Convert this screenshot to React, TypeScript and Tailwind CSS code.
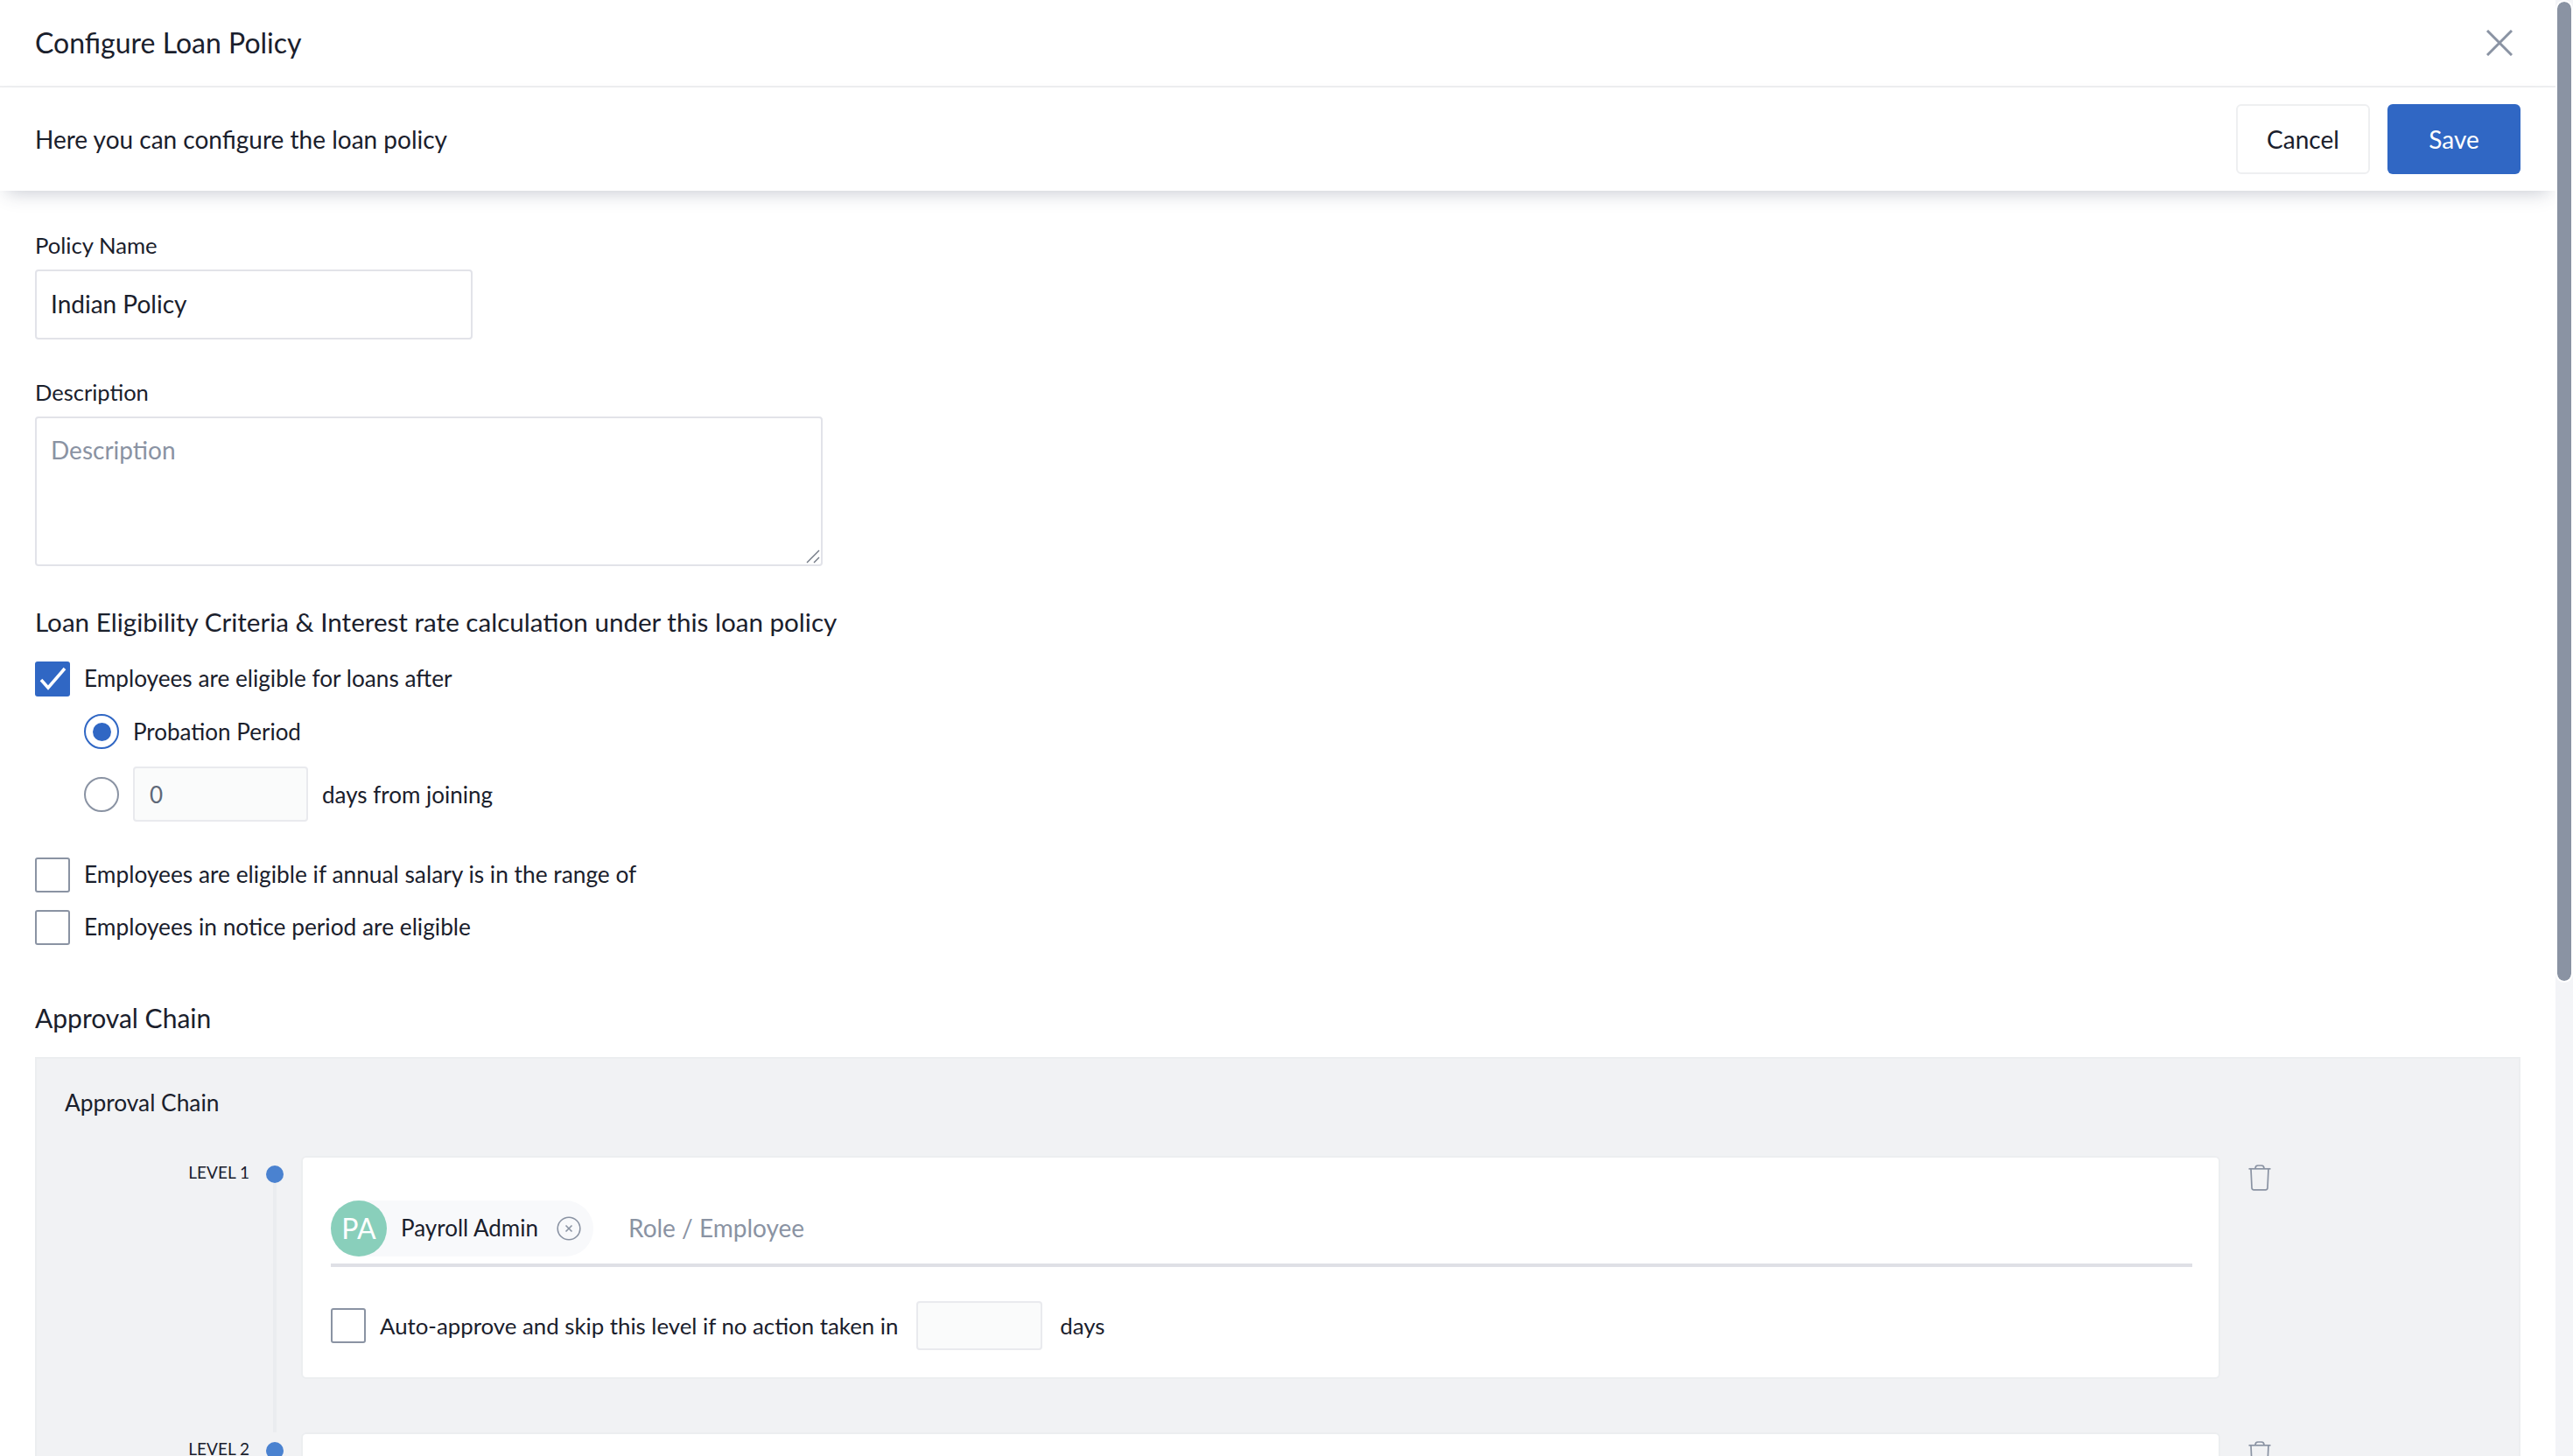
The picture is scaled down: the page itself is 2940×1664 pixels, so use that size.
import React from 'react';

const Check = () => (
  <svg viewBox="0 0 40 40" className="w-10 h-10">
    <path d="M7 21 L15 30 L34 8" fill="none" stroke="#fff" strokeWidth="3.5" />
  </svg>
);

const Checkbox: React.FC<{ checked?: boolean }> = ({ checked }) =>
  checked ? (
    <span className="w-10 h-10 shrink-0 rounded-[3px] bg-[#3067c4] flex items-center justify-center">
      <Check />
    </span>
  ) : (
    <span className="w-10 h-10 shrink-0 rounded-[3px] bg-white border-2 border-[#8a93a3]" />
  );

const Radio: React.FC<{ checked?: boolean }> = ({ checked }) =>
  checked ? (
    <span className="w-10 h-10 shrink-0 rounded-full border-2 border-[#3067c4] bg-white flex items-center justify-center">
      <span className="w-[21px] h-[21px] rounded-full bg-[#3067c4]" />
    </span>
  ) : (
    <span className="w-10 h-10 shrink-0 rounded-full border-2 border-[#8a93a3] bg-white" />
  );

const TrashIcon = () => (
  <svg viewBox="0 0 26 30" className="w-[26px] h-[30px]" fill="none" stroke="#8a93a3" strokeWidth="1.7">
    <path d="M0.5 4.8 H25.5" />
    <path d="M8 4.5 C8 2 9 1 11 1 H15 C17 1 18 2 18 4.5" />
    <path d="M3 5 L4 26.5 A2.2 2.2 0 0 0 6.2 28.8 H19.8 A2.2 2.2 0 0 0 22 26.5 L23 5" />
  </svg>
);

const levels = [
  { name: 'LEVEL 1', approver: 'Payroll Admin', initials: 'PA' },
  { name: 'LEVEL 2' },
];

const App: React.FC = () => {
  return (
    <div className="flex h-[1664px] w-full overflow-hidden bg-white text-[#1a202c] font-['Lato','Liberation_Sans',sans-serif] text-[28px]">
      <div className="w-[2920px] shrink-0 h-full overflow-hidden">
        <div className="h-[100px] border-b-2 border-[#eeeff1] pl-10 pr-[49px] flex items-center justify-between">
          <h1 className="text-[32px] leading-10 font-normal">Configure Loan Policy</h1>
          <svg viewBox="0 0 30 30" className="w-[30px] h-[30px]" stroke="#8a93a3" strokeWidth="3">
            <path d="M1 1 L29 29 M29 1 L1 29" />
          </svg>
        </div>
        <div className="relative z-10 h-[118px] pl-10 pr-10 flex items-center justify-between bg-white shadow-[0_10px_20px_-8px_rgba(50,60,90,0.28)]">
          <p>Here you can configure the loan policy</p>
          <div className="flex gap-5">
            <button className="w-[153px] h-20 rounded-[6px] border-2 border-[#eeeff1] bg-white">Cancel</button>
            <button className="w-[152px] h-20 rounded-[6px] bg-[#3067c4] text-white">Save</button>
          </div>
        </div>

        <div className="px-10 pt-[44px]">
          <label className="block leading-9 text-[25.7px]">Policy Name</label>
          <input
            readOnly
            value="Indian Policy"
            className="block mt-[10px] w-[500px] h-20 px-4 pb-[2px] border-2 border-[#e2e3e9] rounded-[4px] outline-none"
          />
          <label className="block mt-[42px] leading-9 text-[25.5px]">Description</label>
          <div className="relative mt-[10px] w-[900px]">
            <textarea
              placeholder="Description"
              className="block w-[900px] h-[171px] px-4 py-[18px] leading-9 border-2 border-[#e2e3e9] rounded-[4px] outline-none resize-none placeholder:text-[#8a93a3]"
            />
            <svg viewBox="0 0 16 16" className="absolute right-[3px] bottom-[3px] w-4 h-4" stroke="#6f7682" strokeWidth="1.4">
              <path d="M1 15 L15 1 M9 15 L15 9" />
            </svg>
          </div>

          <h2 className="mt-[44px] text-[29.6px] leading-10 font-normal">
            Loan Eligibility Criteria &amp; Interest rate calculation under this loan policy
          </h2>
          <div className="mt-[25px] h-10 flex items-center gap-4 text-[26.2px] leading-9">
            <Checkbox checked />
            <span className="pb-[2px]">Employees are eligible for loans after</span>
          </div>
          <div className="mt-5 ml-14 h-10 flex items-center gap-4 text-[26px] leading-9">
            <Radio checked />
            <span className="pb-[1px]">Probation Period</span>
          </div>
          <div className="mt-5 ml-14 h-[63px] flex items-center gap-4 text-[26px] leading-9">
            <Radio />
            <input
              readOnly
              value="0"
              className="w-[200px] h-[63px] px-[17px] bg-[#fafbfb] border-2 border-[#e9eaee] rounded-[4px] text-[#5f6878] outline-none"
            />
            <span>days from joining</span>
          </div>
          <div className="mt-[41px] h-10 flex items-center gap-4 text-[26.3px] leading-9">
            <Checkbox />
            <span className="pb-[2px]">Employees are eligible if annual salary is in the range of</span>
          </div>
          <div className="mt-5 h-10 flex items-center gap-4 text-[26.3px] leading-9">
            <Checkbox />
            <span className="pb-[2px]">Employees in notice period are eligible</span>
          </div>

          <h2 className="mt-[63px] text-[30px] leading-10 font-normal">Approval Chain</h2>
          <div className="mt-[25px] border-2 border-[#eceef0] bg-[#f1f2f4] pl-8 pt-[32px]">
            <h3 className="text-[26.3px] leading-9 font-normal">Approval Chain</h3>
            <div className="mt-[43px]">
              {levels.map((level) => (
                <div key={level.name} className="flex items-stretch">
                  <div className="w-[211px] text-right text-[19px] leading-[38px] text-[#1a202c]">{level.name}</div>
                  <div className="ml-[19px] w-5 flex flex-col items-center pt-[11px]">
                    <span className="w-5 h-5 shrink-0 rounded-full bg-[#4a82d0]" />
                    <span className="w-1 flex-1 bg-[#eaecef]" />
                  </div>
                  <div className="ml-5 w-[2193px] pb-[61px]">
                    <div className="h-[255px] rounded-[6px] border-2 border-[#eceef0] bg-white pl-8 pr-[30px] pt-[49px]">
                      {level.approver && (
                        <>
                          <div className="flex items-center pb-2 border-b-4 border-[#dfe0e6]">
                            <div className="w-[300px] h-16 rounded-full bg-[#f8f9fb] flex items-center">
                              <span className="w-16 h-16 rounded-full bg-[#89cfbb] text-white text-[32px] flex items-center justify-center">
                                {level.initials}
                              </span>
                              <span className="ml-4 pb-[2px] text-[26px] leading-9">{level.approver}</span>
                              <svg viewBox="0 0 28 28" className="ml-auto mr-[14px] w-7 h-7" fill="none" stroke="#8a93a3" strokeWidth="1.6">
                                <circle cx="14" cy="14" r="12.8" />
                                <path d="M10.5 10.5 L17.5 17.5 M17.5 10.5 L10.5 17.5" />
                              </svg>
                            </div>
                            <input
                              placeholder="Role / Employee"
                              className="ml-10 flex-1 h-16 pb-[2px] bg-transparent outline-none placeholder:text-[#8a93a3]"
                            />
                          </div>
                          <div className="mt-[39px] flex items-center text-[25.8px] leading-9">
                            <Checkbox />
                            <span className="ml-4">Auto-approve and skip this level if no action taken in</span>
                            <input className="ml-[21px] w-[144px] h-14 bg-[#fafbfb] border-2 border-[#e9eaee] rounded-[4px] outline-none" readOnly />
                            <span className="ml-5">days</span>
                          </div>
                        </>
                      )}
                    </div>
                  </div>
                  <div className="ml-8 pt-[10px]">
                    <TrashIcon />
                  </div>
                </div>
              ))}
            </div>
          </div>
        </div>
      </div>
      <div className="w-5 shrink-0 h-full bg-[#f3f4f7] px-[2px] pt-[2px]">
        <div className="h-[1119px] rounded-full bg-[#8a93a3] outline-2 outline-white" />
      </div>
    </div>
  );
};

export default App;
